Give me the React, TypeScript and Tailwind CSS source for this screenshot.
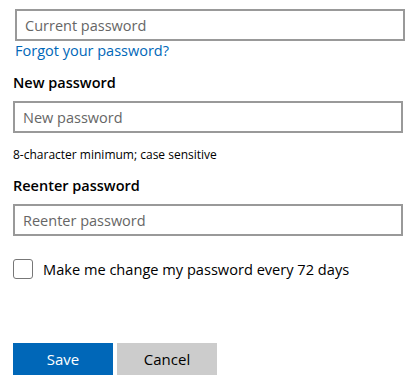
import React, { useState } from 'react';

const font = { fontFamily: '"Open Sans", "Noto Sans", Arial, sans-serif' };

const TextField: React.FC<{ placeholder: string; className?: string }> = ({ placeholder, className = '' }) => (
  <input
    type="password"
    placeholder={placeholder}
    className={`block h-[32px] w-[390px] border-2 border-[#999999] bg-white px-2 text-[14.5px] text-black placeholder:text-[#666666] outline-none ${className}`}
  />
);

export default function App() {
  const [rotate, setRotate] = useState(false);

  return (
    <div className="h-[387px] w-[418px] bg-white pl-[13px] pt-[9px] text-black" style={font}>
      <TextField placeholder="Current password" className="ml-[2px]" />
      <a href="#" className="ml-[2px] block text-[14.5px] leading-[20px] text-[#0067b8]">
        Forgot your password?
      </a>

      <label className="mt-[12px] block text-[14.5px] font-semibold leading-[20px]">New password</label>
      <TextField placeholder="New password" className="mt-[8px]" />
      <p className="mt-[14px] text-[12px] leading-[16px]">8-character minimum; case sensitive</p>

      <label className="mt-[13px] block text-[14.5px] font-semibold leading-[20px]">Reenter password</label>
      <TextField placeholder="Reenter password" className="mt-[8px]" />

      <label className="mt-[23px] flex items-center gap-[10px]">
        <input
          type="checkbox"
          checked={rotate}
          onChange={(e) => setRotate(e.target.checked)}
          className="h-[20px] w-[20px] appearance-none rounded-[3px] border border-[#777777] bg-white checked:bg-[#0067b8]"
        />
        <span className="text-[14.6px] font-medium leading-[20px]">Make me change my password every 72 days</span>
      </label>

      <div className="mt-[64px] flex gap-[4px]">
        <button className="h-[32px] w-[100px] bg-[#0067b8] text-[15px] text-white">Save</button>
        <button className="h-[32px] w-[100px] bg-[#cccccc] text-[15px] text-black">Cancel</button>
      </div>
    </div>
  );
}
